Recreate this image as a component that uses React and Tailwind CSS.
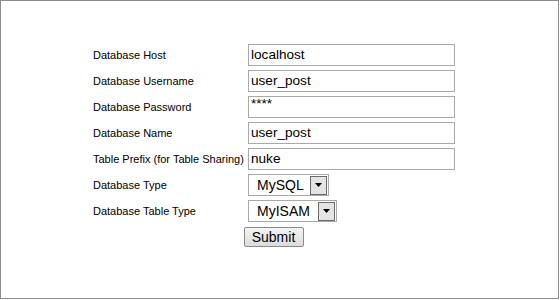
import React from 'react';

const rows = [
  { label: 'Database Host', value: 'localhost' },
  { label: 'Database Username', value: 'user_post' },
  { label: 'Database Password', value: '****', small: true },
  { label: 'Database Name', value: 'user_post' },
  { label: 'Table Prefix (for Table Sharing)', value: 'nuke' },
];

function FakeSelect({ value, width }) {
  return (
    <div className={`flex h-[22px] items-center border border-[#a9a9a9] bg-white ${width}`}>
      <span className="flex-1 pl-[8px] text-[14px] leading-none text-black">{value}</span>
      <span className="mr-[1px] flex h-[19px] w-[17px] items-center justify-center border border-[#6b6b6b] bg-[#e4e4e4]">
        <svg width="7" height="4" viewBox="0 0 7 4">
          <path d="M0 0h7L3.5 4z" fill="#000" />
        </svg>
      </span>
    </div>
  );
}

export default function App() {
  return (
    <div className="h-[300px] w-[560px] bg-white font-['Liberation_Sans',Arial,sans-serif]">
      <div className="h-[299px] w-[559px] border border-[#8c8c8c] pl-[92px] pt-[41px]">
        <div className="grid grid-cols-[155px_207px] text-[11px] text-black">
          {rows.map((r) => (
            <React.Fragment key={r.label}>
              <div className="flex h-[26px] items-center whitespace-nowrap">{r.label}</div>
              <div className="flex h-[26px] items-center">
                <div className={`flex h-[22px] w-[207px] border border-[#a9a9a9] bg-white pl-[2px] text-[13.6px] text-black ${r.small ? 'items-start pt-[1px] leading-[12px]' : 'items-center'}`}>
                  {r.value}
                </div>
              </div>
            </React.Fragment>
          ))}
          <div className="flex h-[26px] items-center">Database Type</div>
          <div className="flex h-[26px] items-center">
            <FakeSelect value="MySQL" width="w-[81px]" />
          </div>
          <div className="flex h-[26px] items-center">Database Table Type</div>
          <div className="flex h-[26px] items-center">
            <FakeSelect value="MyISAM" width="w-[89px]" />
          </div>
          <div className="col-span-2 flex h-[26px] items-center justify-center pr-[1px]">
            <button
              type="button"
              className="h-[20px] w-[60px] rounded-[2px] border border-[#8a8a8a] bg-gradient-to-b from-[#f4f4f4] to-[#dcdcdc] text-[14px] leading-none text-black"
            >
              Submit
            </button>
          </div>
        </div>
      </div>
    </div>
  );
}
